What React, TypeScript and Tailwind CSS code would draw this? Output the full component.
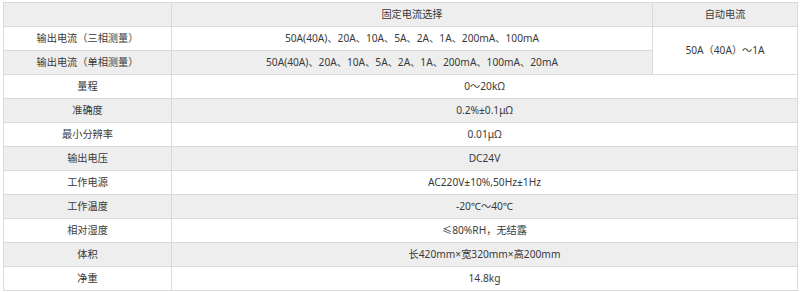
const rows: [string, string][] = [
  ["量程", "0～20kΩ"],
  ["准确度", "0.2%±0.1μΩ"],
  ["最小分辨率", "0.01μΩ"],
  ["输出电压", "DC24V"],
  ["工作电源", "AC220V±10%,50Hz±1Hz"],
  ["工作温度", "-20℃～40℃"],
  ["相对湿度", "≤80%RH，无结露"],
  ["体积", "长420mm×宽320mm×高200mm"],
  ["净重", "14.8kg"],
];

const cell = "h-[24px] border border-[#dadada] p-0 text-center align-middle";

export default function App() {
  return (
    <div className="h-[292px] w-[800px] bg-white pl-[3px] pt-[2px] font-['Noto_Sans','Noto_Sans_CJK_SC',sans-serif] text-[10.2px] text-[#3a3a3a]">
      <table className="w-[794px] table-fixed border-collapse">
        <colgroup>
          <col className="w-[168px]" />
          <col className="w-[481px]" />
          <col className="w-[145px]" />
        </colgroup>
        <tbody>
          <tr className="bg-[#eeeeee]">
            <td className={cell}></td>
            <td className={cell}>固定电流选择</td>
            <td className={cell}>自动电流</td>
          </tr>
          <tr className="bg-white">
            <td className={cell}>输出电流（三相测量）</td>
            <td className={cell}>50A(40A)、20A、10A、5A、2A、1A、200mA、100mA</td>
            <td rowSpan={2} className={`${cell} bg-white`}>
              50A（40A）～1A
            </td>
          </tr>
          <tr className="bg-[#eeeeee]">
            <td className={cell}>输出电流（单相测量）</td>
            <td className={cell}>50A(40A)、20A、10A、5A、2A、1A、200mA、100mA、20mA</td>
          </tr>
          {rows.map(([label, value], i) => (
            <tr key={label} className={i % 2 === 0 ? "bg-white" : "bg-[#eeeeee]"}>
              <td className={cell}>{label}</td>
              <td colSpan={2} className={cell}>
                {value}
              </td>
            </tr>
          ))}
        </tbody>
      </table>
    </div>
  );
}
